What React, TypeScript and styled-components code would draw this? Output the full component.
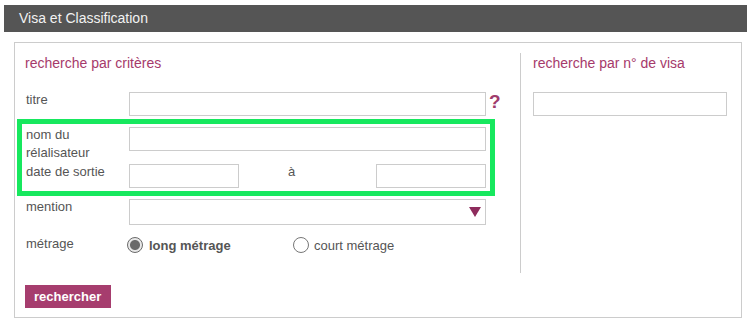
import React from "react";
import styled, { createGlobalStyle } from "styled-components";

const GlobalStyle = createGlobalStyle`
  body {
    margin: 0;
    background: #fff;
    font-family: "Liberation Sans", Arial, sans-serif;
  }
`;

export default function App() {
  return (
    <>
      <GlobalStyle />
      <Header>Visa et Classification</Header>
      <Panel>
        <Columns>
          <CriteriaColumn>
            <SectionTitle>recherche par critères</SectionTitle>

            <Row $top={18}>
              <Label>titre</Label>
              <TextBox $width={357} />
              <Help>?</Help>
            </Row>

            <Highlight>
              <Row>
                <Label>
                  nom du
                  <br />
                  rélalisateur
                </Label>
                <TextBox $width={357} />
              </Row>
              <Row>
                <Label>date de sortie</Label>
                <TextBox $width={110} />
                <RangeWord>à</RangeWord>
                <TextBox $width={110} />
              </Row>
            </Highlight>

            <Row>
              <Label>mention</Label>
              <Select>
                <Arrow />
              </Select>
            </Row>

            <Row $top={9}>
              <Label>métrage</Label>
              <RadioGroup>
                <RadioOption $width={166}>
                  <RadioDot $checked />
                  <RadioText $bold>long métrage</RadioText>
                </RadioOption>
                <RadioOption>
                  <RadioDot />
                  <RadioText>court métrage</RadioText>
                </RadioOption>
              </RadioGroup>
            </Row>
          </CriteriaColumn>

          <VisaColumn>
            <SectionTitle>recherche par n° de visa</SectionTitle>
            <VisaBox />
          </VisaColumn>
        </Columns>

        <SearchButton>rechercher</SearchButton>
      </Panel>
    </>
  );
}

const Header = styled.div`
  margin: 5px 0 0 4px;
  height: 27px;
  padding-left: 15px;
  background: #555;
  color: #f2f2f2;
  font-size: 14px;
  line-height: 27px;
`;

const Panel = styled.div`
  box-sizing: border-box;
  width: 728px;
  height: 276px;
  margin: 10px 0 0 14px;
  padding: 10px 0 0 10px;
  border: 1px solid #ccc;
`;

const Columns = styled.div`
  display: flex;
  height: 220px;
`;

const CriteriaColumn = styled.div`
  width: 495px;
  border-right: 1px solid #ccc;
`;

const VisaColumn = styled.div`
  flex: 1;
  padding: 0 14px 0 12px;
`;

const SectionTitle = styled.div`
  margin-top: 1px;
  color: #a63a6b;
  font-size: 14px;
  line-height: 18px;
`;

const Row = styled.div<{ $top?: number }>`
  display: flex;
  align-items: flex-start;
  margin-top: ${(p) => p.$top ?? 0}px;
`;

const Label = styled.div`
  width: 104px;
  padding: 1px 0 0 1px;
  box-sizing: border-box;
  color: #555;
  font-size: 13px;
  line-height: 18px;
`;

const TextBox = styled.div<{ $width: number }>`
  box-sizing: border-box;
  width: ${(p) => p.$width}px;
  height: 24px;
  margin-top: 2px;
  border: 1px solid #ccc;
  background: #fff;
`;

const Help = styled.span`
  margin: 1px 0 0 3px;
  color: #a03c6c;
  font-size: 19px;
  font-weight: bold;
  line-height: 22px;
`;

const Highlight = styled.div`
  box-sizing: border-box;
  width: 478px;
  margin: 3px 0 1px -8px;
  padding: 1px 0 3px 3px;
  border: 5px solid #17e85e;
`;

const RangeWord = styled.span`
  width: 137px;
  padding: 1px 0 0 49px;
  box-sizing: border-box;
  color: #555;
  font-size: 13px;
  line-height: 18px;
`;

const Select = styled.div`
  box-sizing: border-box;
  position: relative;
  width: 357px;
  height: 26px;
  margin-top: 2px;
  border: 1px solid #ccc;
  background: #fff;
`;

const Arrow = styled.span`
  position: absolute;
  right: 4px;
  top: 7px;
  width: 0;
  height: 0;
  border-left: 6.5px solid transparent;
  border-right: 6.5px solid transparent;
  border-top: 10px solid #8e2c5d;
`;

const RadioGroup = styled.div`
  display: flex;
  align-items: center;
  height: 22px;
  margin-left: -2px;
`;

const RadioOption = styled.label<{ $width?: number }>`
  display: flex;
  align-items: center;
  width: ${(p) => (p.$width ? `${p.$width}px` : "auto")};
`;

const RadioDot = styled.span<{ $checked?: boolean }>`
  box-sizing: border-box;
  width: 16px;
  height: 16px;
  border-radius: 50%;
  border: 1px solid ${(p) => (p.$checked ? "#6a6a6a" : "#777")};
  background: ${(p) =>
    p.$checked
      ? "radial-gradient(circle, #6a6a6a 0 4.5px, #e8e8e8 5.5px)"
      : "#fff"};
`;

const RadioText = styled.span<{ $bold?: boolean }>`
  margin-left: ${(p) => (p.$bold ? 6 : 5)}px;
  color: #555;
  font-size: 13px;
  font-weight: ${(p) => (p.$bold ? "bold" : "normal")};
`;

const VisaBox = styled.div`
  box-sizing: border-box;
  height: 24px;
  margin-top: 20px;
  border: 1px solid #ccc;
`;

const SearchButton = styled.button`
  margin-top: 12px;
  height: 23px;
  padding: 0 10px 0 9px;
  border: none;
  background: #a63d6e;
  color: #fff;
  font-family: "Liberation Sans", Arial, sans-serif;
  font-size: 13px;
  font-weight: bold;
  cursor: pointer;
`;
